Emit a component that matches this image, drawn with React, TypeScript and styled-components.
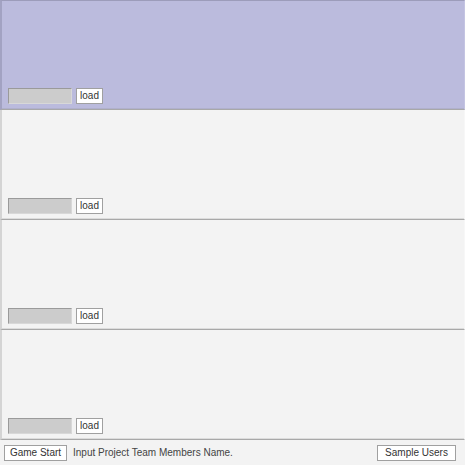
import React from "react";
import styled, { createGlobalStyle } from "styled-components";

const Global = createGlobalStyle`
  html, body { margin: 0; padding: 0; background: #f3f3f3; }
  body { font-family: "Liberation Sans", Arial, sans-serif; font-size: 10px; }
`;

const Page = styled.div`
  width: 465px;
  height: 465px;
  display: flex;
  flex-direction: column;
  overflow: hidden;
`;

const Panel = styled.div<{ $active?: boolean }>`
  box-sizing: border-box;
  height: 110px;
  flex: none;
  display: flex;
  align-items: flex-end;
  gap: 4px;
  padding: 0 0 5px 6px;
  background: ${(p) => (p.$active ? "#bbbbdd" : "#f3f3f3")};
  border-left: 2px solid ${(p) => (p.$active ? "#a2a2c2" : "#d4d4d4")};
  border-right: 1px solid ${(p) => (p.$active ? "#c4c4e2" : "#f7f7f7")};
  border-top: ${(p) => (p.$active ? "1px solid #9c9cba" : "none")};
  border-bottom: 1px solid #a8a8a8;
  box-shadow: inset 0 -1px 0 ${(p) => (p.$active ? "#b0b0cc" : "#dcdcdc")};
`;

const NameInput = styled.input`
  box-sizing: border-box;
  width: 64px;
  height: 16px;
  margin: 0;
  padding: 0 2px;
  background: #cccccc;
  border-style: solid;
  border-width: 1px;
  border-color: #9a9a9a #d8d8d8 #d8d8d8 #9a9a9a;
  font-family: "Liberation Sans", Arial, sans-serif;
  font-size: 10px;
  outline: none;
`;

const SmallButton = styled.button<{ $w: number }>`
  box-sizing: border-box;
  width: ${(p) => p.$w}px;
  height: 16px;
  margin: 0;
  padding: 0;
  background: #ffffff;
  border: 1px solid #a0a0a0;
  color: #333;
  font-family: "Liberation Sans", Arial, sans-serif;
  font-size: 10px;
  line-height: 14px;
  cursor: pointer;
`;

const Bar = styled.div`
  flex: 1;
  display: flex;
  align-items: center;
  padding: 0 9px 0 4px;
  background: #f3f3f3;
`;

const Hint = styled.span`
  margin-left: 6px;
  color: #444;
  font-size: 10px;
  flex: 1;
`;

const panels = [true, false, false, false];

export default function App() {
  return (
    <Page>
      <Global />
      {panels.map((a, i) => (
        <Panel key={i} $active={a}>
          <NameInput />
          <SmallButton $w={27}>load</SmallButton>
        </Panel>
      ))}
      <Bar>
        <SmallButton $w={63}>Game Start</SmallButton>
        <Hint>Input Project Team Members Name.</Hint>
        <SmallButton $w={79}>Sample Users</SmallButton>
      </Bar>
    </Page>
  );
}
